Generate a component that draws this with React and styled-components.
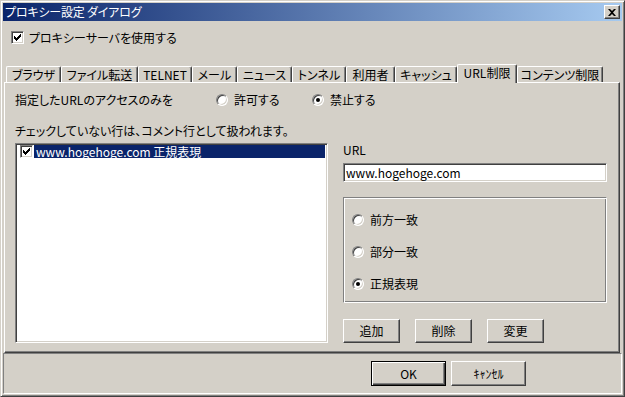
import React from 'react';
import styled, { createGlobalStyle, css } from 'styled-components';

const FONT = '"Noto Sans CJK JP", "Noto Sans", sans-serif';

const GlobalStyle = createGlobalStyle`
  html, body {
    margin: 0;
    padding: 0;
    width: 625px;
    height: 397px;
    overflow: hidden;
    background: #d4d0c8;
  }
  body {
    font-family: ${FONT};
    font-size: 12px;
    line-height: 14px;
    font-feature-settings: "palt";
    color: #000;
  }
`;

const Window = styled.div`
  width: 625px;
  height: 397px;
  box-sizing: border-box;
  background: #d4d0c8;
  border: 1px solid;
  border-color: #d4d0c8 #404040 #404040 #d4d0c8;
  box-shadow: inset 1px 1px 0 #fff, inset -1px -1px 0 #808080;
  padding: 2px;
  display: flex;
  flex-direction: column;
`;

const TitleBar = styled.div`
  height: 18px;
  flex: none;
  display: flex;
  align-items: center;
  justify-content: space-between;
  padding: 0 2px 0 2px;
  background: linear-gradient(to right, #0a246a, #a6caf0);
  color: #fff;
`;

const Title = styled.span`
  font-size: 12px;
  letter-spacing: -0.2px;
`;

const CloseButton = styled.div`
  width: 16px;
  height: 14px;
  box-sizing: border-box;
  background: #d4d0c8;
  border: 1px solid;
  border-color: #fff #404040 #404040 #fff;
  box-shadow: inset -1px -1px 0 #808080;
  display: flex;
  align-items: center;
  justify-content: center;
`;

const CheckRow = styled.label`
  display: flex;
  align-items: center;
  gap: 5px;
  height: 13px;
  flex: none;
  margin: 10px 0 0 8px;
`;

const Box = styled.span`
  width: 13px;
  height: 13px;
  flex: none;
  box-sizing: border-box;
  background: #fff;
  border: 1px solid;
  border-color: #808080 #fff #fff #808080;
  box-shadow: inset 1px 1px 0 #404040, inset -1px -1px 0 #d4d0c8;
  display: flex;
  align-items: center;
  justify-content: center;
`;

const TabStrip = styled.div`
  display: flex;
  align-items: flex-end;
  height: 18px;
  flex: none;
  margin-top: 20px;
  padding-left: 3px;
`;

const Tab = styled.div`
  width: ${p => p.$w}px;
  height: 16px;
  box-sizing: border-box;
  flex: none;
  display: flex;
  align-items: center;
  justify-content: center;
  white-space: nowrap;
  background: #d4d0c8;
  border-top: 1px solid #fff;
  border-left: 1px solid #fff;
  border-right: 1px solid #404040;
  border-radius: 2px 2px 0 0;
  box-shadow: inset -1px 0 0 #808080;
  ${p => p.$active && css`
    height: 19px;
    margin-bottom: -1px;
    position: relative;
    z-index: 1;
    padding-bottom: 2px;
  `}
`;

const Panel = styled.div`
  height: 271px;
  flex: none;
  box-sizing: border-box;
  margin: 0 2px 0 1px;
  border: 1px solid;
  border-color: #fff #404040 #404040 #fff;
  box-shadow: inset -1px -1px 0 #808080;
  padding: 10px 11px 9px 10px;
  display: flex;
  flex-direction: column;
`;

const ModeRow = styled.div`
  display: flex;
  align-items: center;
  height: 14px;
`;

const ModeLabel = styled.span`
  width: 201px;
  flex: none;
`;

const RadioOption = styled.label`
  display: flex;
  align-items: center;
  gap: 6px;
  width: ${p => p.$w || 'auto'};
  flex: none;
  height: 14px;
`;

const RadioDot = styled.span`
  width: 12px;
  height: 12px;
  flex: none;
  box-sizing: border-box;
  border-radius: 50%;
  background: #fff;
  border: 1px solid;
  border-color: #808080 #fff #fff #808080;
  box-shadow: inset 1px 1px 0 #404040, inset -1px -1px 0 #d4d0c8;
  display: flex;
  align-items: center;
  justify-content: center;
  &::after {
    content: '';
    width: 4px;
    height: 4px;
    border-radius: 50%;
    background: ${p => (p.$checked ? '#000' : 'transparent')};
  }
`;

const Note = styled.div`
  margin-top: 18px;
  height: 12px;
  line-height: 12px;
`;

const Main = styled.div`
  flex: 1;
  display: grid;
  grid-template-columns: 313px 264px;
  column-gap: 15px;
  margin-top: 6px;
`;

const ListBox = styled.div`
  box-sizing: border-box;
  background: #fff;
  border: 1px solid;
  border-color: #808080 #fff #fff #808080;
  box-shadow: inset 1px 1px 0 #404040, inset -1px -1px 0 #d4d0c8;
  padding: 1px 2px 2px 2px;
`;

const ListRow = styled.div`
  display: flex;
  align-items: center;
  height: 13px;
  padding-left: 2px;
  gap: 1px;
`;

const RowText = styled.span`
  flex: 1;
  height: 13px;
  line-height: 13px;
  padding-left: 2px;
  background: ${p => (p.$selected ? '#0a246a' : 'transparent')};
  color: ${p => (p.$selected ? '#fff' : '#000')};
  white-space: nowrap;
`;

const Side = styled.div`
  display: flex;
  flex-direction: column;
`;

const FieldLabel = styled.div`
  height: 12px;
  line-height: 12px;
  padding-top: 1px;
`;

const TextField = styled.div`
  margin-top: 7px;
  height: 19px;
  box-sizing: border-box;
  background: #fff;
  border: 1px solid;
  border-color: #808080 #fff #fff #808080;
  box-shadow: inset 1px 1px 0 #404040, inset -1px -1px 0 #d4d0c8;
  padding: 0 2px;
  line-height: 17px;
`;

const MatchGroup = styled.div`
  margin-top: 15px;
  height: 106px;
  box-sizing: border-box;
  border: 1px solid;
  border-color: #808080 #fff #fff #808080;
  box-shadow: inset 1px 1px 0 #fff, inset -1px -1px 0 #808080;
  padding: 15px 8px 13px 8px;
  display: flex;
  flex-direction: column;
  gap: 18px;
`;

const ButtonRow = styled.div`
  display: flex;
  gap: ${p => p.$gap}px;
  ${p => p.$bottom && css`margin-top: auto;`}
`;

const Button = styled.button`
  width: ${p => p.$w}px;
  height: ${p => p.$h}px;
  box-sizing: border-box;
  padding: 0;
  background: #d4d0c8;
  font: inherit;
  color: #000;
  border: 1px solid;
  border-color: #fff #404040 #404040 #fff;
  box-shadow: inset -1px -1px 0 #808080;
  ${p => p.$default && css`
    border-color: #000;
    box-shadow: inset 1px 1px 0 #fff, inset -1px -1px 0 #404040, inset -2px -2px 0 #808080;
  `}
`;

const Footer = styled.div`
  flex: 1;
  box-sizing: border-box;
  border: 1px solid;
  border-color: #808080 #fff #fff #808080;
  padding: 7px 95px 0 0;
  display: flex;
  justify-content: flex-end;
  align-items: flex-start;
`;

const Check = () => (
  <svg width="7" height="7" viewBox="0 0 7 7">
    <path d="M0 2h1v1h1v1h1v-1h1v-1h1v-1h1v-1h1v3h-1v1h-1v1h-1v1h-1v1h-1v-1h-1v-1h-1z" fill="#000" />
  </svg>
);

const CloseGlyph = () => (
  <svg width="8" height="7" viewBox="0 0 8 7">
    <path d="M0 0h2l2 2 2-2h2l-3 3.5 3 3.5h-2l-2-2-2 2h-2l3-3.5z" fill="#000" />
  </svg>
);

const tabs = [
  { label: 'ブラウザ', w: 55 },
  { label: 'ファイル転送', w: 77 },
  { label: 'TELNET', w: 54 },
  { label: 'メール', w: 45 },
  { label: 'ニュース', w: 55 },
  { label: 'トンネル', w: 54 },
  { label: '利用者', w: 49 },
  { label: 'キャッシュ', w: 62 },
  { label: 'URL制限', w: 60, active: true },
  { label: 'コンテンツ制限', w: 86 },
];

const matchModes = [
  { label: '前方一致', checked: false },
  { label: '部分一致', checked: false },
  { label: '正規表現', checked: true },
];

export default function App() {
  return (
    <>
      <GlobalStyle />
      <Window>
        <TitleBar>
          <Title>プロキシー設定 ダイアログ</Title>
          <CloseButton><CloseGlyph /></CloseButton>
        </TitleBar>

        <CheckRow>
          <Box><Check /></Box>
          <span>プロキシーサーバを使用する</span>
        </CheckRow>

        <TabStrip>
          {tabs.map(t => (
            <Tab key={t.label} $w={t.w} $active={t.active}>{t.label}</Tab>
          ))}
        </TabStrip>

        <Panel>
          <ModeRow>
            <ModeLabel>指定したURLのアクセスのみを</ModeLabel>
            <RadioOption $w="96px"><RadioDot />許可する</RadioOption>
            <RadioOption><RadioDot $checked />禁止する</RadioOption>
          </ModeRow>

          <Note>チェックしていない行は、コメント行として扱われます。</Note>

          <Main>
            <ListBox>
              <ListRow>
                <Box><Check /></Box>
                <RowText $selected>www.hogehoge.com 正規表現</RowText>
              </ListRow>
            </ListBox>

            <Side>
              <FieldLabel>URL</FieldLabel>
              <TextField>www.hogehoge.com</TextField>
              <MatchGroup>
                {matchModes.map(m => (
                  <RadioOption key={m.label}>
                    <RadioDot $checked={m.checked} />
                    {m.label}
                  </RadioOption>
                ))}
              </MatchGroup>
              <ButtonRow $gap={15} $bottom>
                <Button $w={57} $h={24}>追加</Button>
                <Button $w={57} $h={24}>削除</Button>
                <Button $w={57} $h={24}>変更</Button>
              </ButtonRow>
            </Side>
          </Main>
        </Panel>

        <Footer>
          <ButtonRow $gap={5}>
            <Button $w={75} $h={25} $default>OK</Button>
            <Button $w={75} $h={25}>ｷｬﾝｾﾙ</Button>
          </ButtonRow>
        </Footer>
      </Window>
    </>
  );
}
